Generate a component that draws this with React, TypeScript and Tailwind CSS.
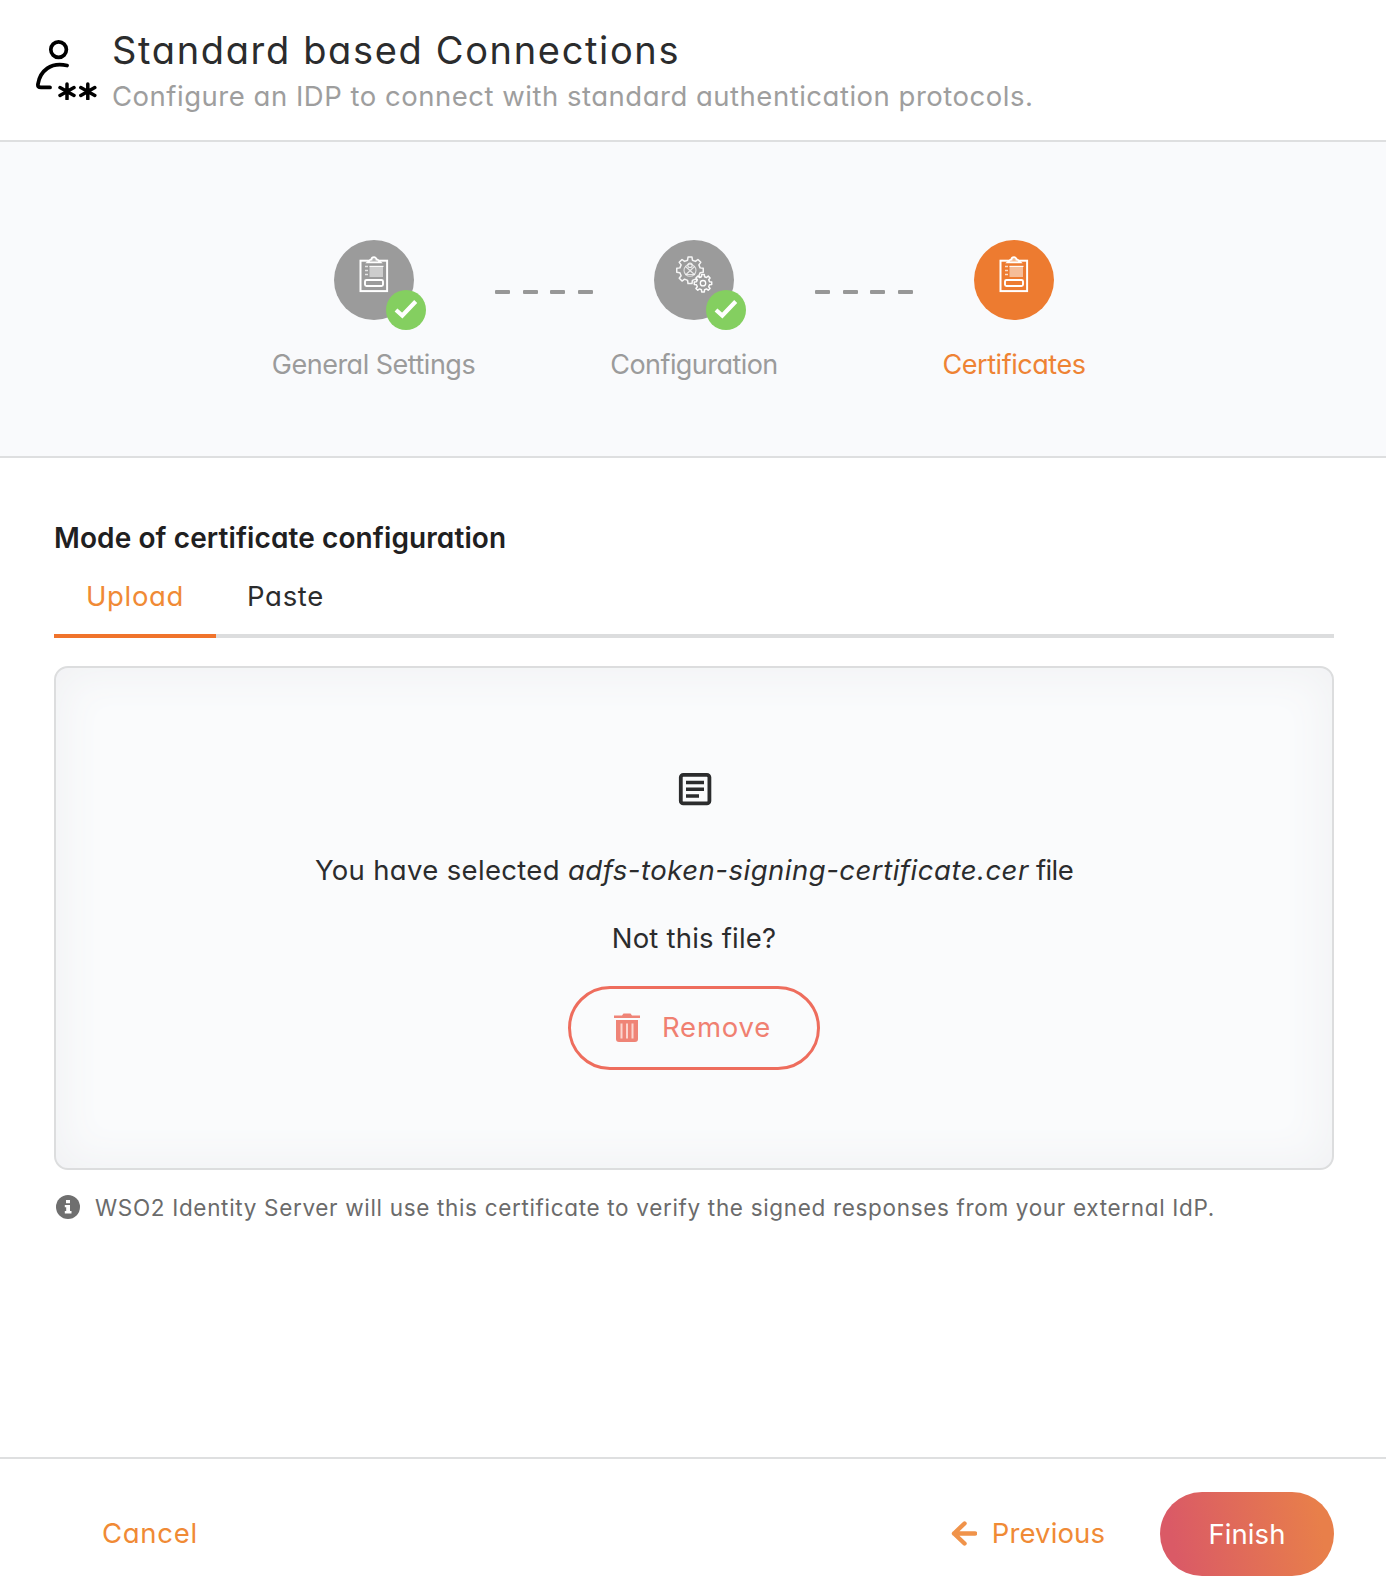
import React from "react";

function UserAsterisks() {
  return (
    <svg className="block h-[62px] w-[62px]" viewBox="0 0 62 62" fill="none" stroke="#000" strokeLinecap="round" strokeLinejoin="round">
      <circle cx="22.6" cy="11.6" r="7.8" strokeWidth="3.7" />
      <path d="M31 27.5 C15 23.5 4 33 2 46 C1.6 48.5 2.6 49.4 5 49.4 H14" strokeWidth="3.8" />
      <path d="M31 46 V61 M24 49.5 L38 57.5 M38 49.5 L24 57.5" strokeWidth="3.5" />
      <path d="M51.8 46 V61 M44.8 49.5 L58.8 57.5 M58.8 49.5 L44.8 57.5" strokeWidth="3.5" />
    </svg>
  );
}

function Clipboard({ active }: { active?: boolean }) {
  return (
    <svg className="block h-[38px] w-[30px]" viewBox="0 0 30 38" fill="none" stroke="#fff">
      <rect x="1.5" y="5.7" width="26.6" height="30.4" strokeWidth="2" />
      <path d="M8.5 7.3 H21.5 L18.5 4.6 H17.5 C17.5 1.4 12.5 1.4 12.5 4.6 H11.5 Z" fill={active ? "#f6b98f" : "#b5b5b5"} strokeWidth="1.7" />
      <path d="M6 11.5 H9 M6 15.5 H9 M6 19.5 H9" strokeWidth="1.5" opacity="0.75" />
      <rect x="10.5" y="11" width="13.5" height="11" fill="#fff" stroke="none" opacity="0.5" />
      <path d="M10.5 11.4 H24.5" strokeWidth="1.2" opacity="0.9" />
      <rect x="6" y="25" width="18" height="6" rx="1.5" strokeWidth="1.9" />
    </svg>
  );
}

function gearPath(cx: number, cy: number, outer: number, inner: number, teeth: number) {
  const pts: string[] = [];
  for (let i = 0; i < teeth; i++) {
    const step = (Math.PI * 2) / teeth;
    const a = i * step - Math.PI / 2;
    [[-0.3, inner], [-0.19, outer], [0.19, outer], [0.3, inner]].forEach(([o, r]) => {
      const t = a + o * step;
      pts.push(`${(cx + r * Math.cos(t)).toFixed(2)} ${(cy + r * Math.sin(t)).toFixed(2)}`);
    });
  }
  return `M${pts.join(" L")} Z`;
}

function Gears() {
  return (
    <svg className="block h-[38px] w-[38px]" viewBox="0 0 38 38" fill="none" stroke="#fff" strokeLinejoin="round">
      <path d={gearPath(15, 15.3, 13.4, 10.4, 8)} strokeWidth="1.5" opacity="0.9" />
      <circle cx="15" cy="10.3" r="2.2" strokeWidth="1.2" opacity="0.8" />
      <circle cx="15" cy="15.3" r="6" strokeWidth="1.1" opacity="0.7" />
      <path d="M10.5 11.5 L20 20 M19.5 11.5 L10.5 20 M10.5 19.5 H19.5" strokeWidth="1.2" opacity="0.75" />
      <path d={gearPath(28, 28.2, 8.8, 6.7, 8)} fill="#9b9b9b" strokeWidth="1.5" opacity="0.95" />
      <circle cx="28" cy="28.2" r="2.7" strokeWidth="1.3" />
    </svg>
  );
}

function Done() {
  return (
    <span className="absolute top-[50px] left-[52px] flex size-10 items-center justify-center rounded-full bg-[#84cf60]">
      <svg className="block h-[20px] w-[24px]" viewBox="0 0 24 20" fill="none" stroke="#fff" strokeWidth="4.2">
        <path d="M2 10 L8.3 15.5 L21.7 1.5" />
      </svg>
    </span>
  );
}

function Dashes() {
  return (
    <div className="relative left-[10px] mt-[50px] flex w-[98px] justify-between">
      {[0, 1, 2, 3].map((i) => (
        <span key={i} className="h-[4px] w-[15px] rounded-[1px] bg-[#979797]" />
      ))}
    </div>
  );
}

function Step({ label, labelClass, active, children }: { label: string; labelClass: string; active?: boolean; children: React.ReactNode }) {
  return (
    <div className="flex w-[222px] flex-col items-center">
      <div className={`relative flex size-20 items-start justify-center rounded-full pt-[15px] ${active ? "bg-[#ed7b30]" : "bg-[#9b9b9b]"}`}>
        {children}
        {!active && <Done />}
      </div>
      <span className={`mt-[25px] text-[27px] leading-[40px] whitespace-nowrap ${active ? "text-[#ee8334]" : "text-[#9b9b9b]"} ${labelClass}`}>{label}</span>
    </div>
  );
}

export default function App() {
  return (
    <div className="flex h-[1584px] w-[1386px] flex-col overflow-hidden bg-white font-['Inter',sans-serif] font-normal text-[#2b2c2d] [font-feature-settings:'cv11']">
      <header className="flex h-[142px] shrink-0 border-b-2 border-[#dedfe0] pl-[36px]">
        <div className="pt-[38px]">
          <UserAsterisks />
        </div>
        <div className="ml-[14px] flex flex-col pt-[25px]">
          <h1 className="text-[38px] leading-[50px] font-normal tracking-[1.65px] whitespace-nowrap">Standard based Connections</h1>
          <p className="mt-[1px] text-[27.5px] leading-[40px] tracking-[0.51px] whitespace-nowrap text-[#9e9e9e]">Configure an IDP to connect with standard authentication protocols.</p>
        </div>
      </header>

      <section className="flex h-[316px] shrink-0 justify-center border-b-2 border-[#dedfe0] bg-[#f9fafc] pt-[98px] pl-[2px]">
        <Step label="General Settings" labelClass="-ml-[1px] tracking-[-0.5px]">
          <Clipboard />
        </Step>
        <Dashes />
        <Step label="Configuration" labelClass="tracking-[-0.55px]">
          <Gears />
        </Step>
        <Dashes />
        <Step label="Certificates" labelClass="tracking-[-0.45px]" active>
          <Clipboard active />
        </Step>
      </section>

      <main className="flex flex-1 flex-col pt-[60px] pr-[52px] pl-[54px]">
        <h2 className="text-[28px] leading-[40px] font-semibold tracking-[0.1px] whitespace-nowrap text-[#1f2021]">Mode of certificate configuration</h2>
        <div className="mt-[10px] flex h-[70px] border-b-4 border-[#dcddde]">
          <div className="h-[70px] w-[162px] border-b-4 border-[#f0732b] pt-[8px] pl-[32px] text-[27.5px] leading-[40px] tracking-[0.65px] text-[#f08a35]">Upload</div>
          <div className="pt-[8px] pl-[31px] text-[27.5px] leading-[40px] tracking-[0.7px]">Paste</div>
        </div>

        <div className="mt-[28px] flex h-[504px] shrink-0 flex-col items-center rounded-[14px] border-2 border-[#dcddde] bg-[#fafbfc] shadow-[inset_0_0_40px_8px_#f1f2f4]">
          <svg className="mt-[104px] ml-[2px] block size-[34px]" viewBox="0 0 34 34" fill="none" stroke="#2b2c2d">
            <rect x="2.8" y="2.8" width="28.6" height="28.6" rx="2.5" strokeWidth="3.8" />
            <path d="M8 10.5 H26 M8 17.3 H26 M8 24 H21" strokeWidth="3.6" />
          </svg>
          <p className="mt-[44px] text-[27.5px] leading-[40px] whitespace-nowrap">
            <span className="tracking-[0.33px]">You have selected </span>
            <em className="tracking-[0.5px]">adfs-token-signing-certificate.cer</em>
            <span className="tracking-[-0.6px]"> file</span>
          </p>
          <p className="mt-[28px] text-[27.5px] leading-[40px] tracking-[0.2px]">Not this file?</p>
          <button className="mt-[28px] flex h-[84px] w-[252px] items-center rounded-full border-[3.5px] border-[#ee6d5d] pl-[43px] text-[27.5px] text-[#f08071]">
            <svg className="relative -top-px block h-[29px] w-[26px]" viewBox="0 0 26 29" fill="#ef8477">
              <path d="M0 2.5 H8 L9.5 .5 H16.5 L18 2.5 H26 V5 H0 Z" />
              <path d="M2 7 H24 V26 Q24 29 21 29 H5 Q2 29 2 26 Z" />
              <path d="M7.5 10.5 V25.5 M13 10.5 V25.5 M18.5 10.5 V25.5" stroke="#fbd5d0" strokeWidth="2" />
            </svg>
            <span className="ml-[22px] tracking-[0.8px]">Remove</span>
          </button>
        </div>

        <div className="mt-[18px] flex items-center">
          <svg className="relative -top-px ml-[2px] block size-[24px]" viewBox="0 0 24 24">
            <circle cx="12" cy="12" r="12" fill="#6f6f6f" />
            <path d="M10 5 H14 V8.2 H10 Z M8.8 10 H14 V16 H15.5 V18.5 H8.8 V16 H10.2 V12.3 H8.8 Z" fill="#fff" />
          </svg>
          <span className="ml-[15px] text-[22.5px] leading-[40px] tracking-[0.67px] whitespace-nowrap text-[#6b6b6b]">WSO2 Identity Server will use this certificate to verify the signed responses from your external IdP.</span>
        </div>
      </main>

      <footer className="flex h-[127px] shrink-0 border-t-2 border-[#dedfe0] pr-[52px] pl-[102px] text-[27.5px] leading-[40px] text-[#f08a35]">
        <button className="mt-[54px] h-[40px] tracking-[0.7px]">Cancel</button>
        <button className="mt-[54px] ml-auto flex h-[40px] items-center">
          <svg className="block h-[25px] w-[26px]" viewBox="0 0 26 25" fill="none" stroke="#f0934a" strokeWidth="4.4">
            <path d="M24 12.5 H3 M13.5 2.5 L3 12.5 L13.5 22.5" strokeLinejoin="round" strokeLinecap="round" />
          </svg>
          <span className="ml-[15px] tracking-[0.1px]">Previous</span>
        </button>
        <button className="mt-[33px] ml-[55px] h-[84px] w-[174px] rounded-full bg-[linear-gradient(80deg,#da5a66_10%,#e87f4a_90%)] pb-px tracking-[0.1px] text-white">Finish</button>
      </footer>
    </div>
  );
}
